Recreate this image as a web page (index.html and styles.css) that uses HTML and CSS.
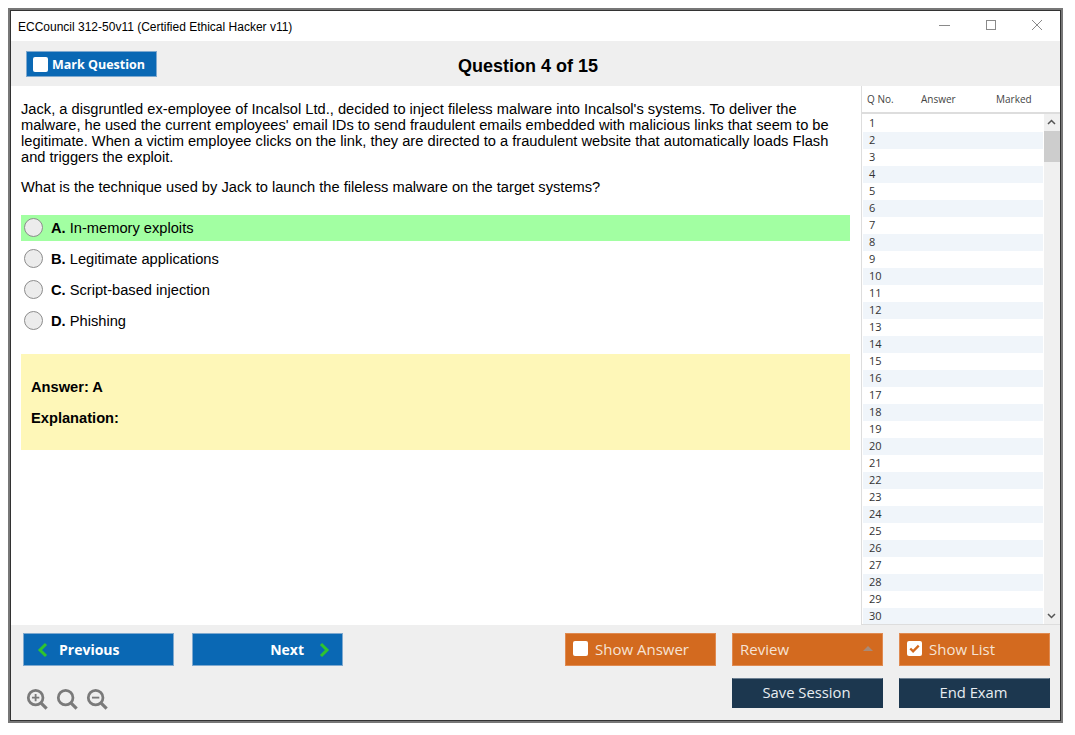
FILE: index.html
```html
<!DOCTYPE html>
<html lang="en">
<head>
    <meta charset="UTF-8">
    <title>ECCouncil 312-50v11</title>
    <link rel="stylesheet" href="styles.css">
</head>
<body>

<div class="window">
    <div class="titlebar">
        <span class="app-title">ECCouncil 312-50v11 (Certified Ethical Hacker v11)</span>
        <div class="window-controls">
            <svg width="12" height="12" viewBox="0 0 12 12"><path d="M0 6.5h11" stroke="#8a8a8a" fill="none"/></svg>
            <svg width="12" height="12" viewBox="0 0 12 12"><rect x="1.5" y="1.5" width="9" height="9" stroke="#8a8a8a" fill="none"/></svg>
            <svg width="12" height="12" viewBox="0 0 12 12"><path d="M1 1l10 10M11 1L1 11" stroke="#8a8a8a" fill="none"/></svg>
        </div>
    </div>

    <div class="toolbar">
        <button class="btn btn-blue mark-btn"><span class="check"></span>Mark Question</button>
        <h1>Question 4 of 15</h1>
    </div>

    <div class="main">
        <div class="question-pane">
            <p class="question">Jack, a disgruntled ex-employee of Incalsol Ltd., decided to inject fileless malware into Incalsol's systems. To deliver the malware, he used the current employees' email IDs to send fraudulent emails embedded with malicious links that seem to be legitimate. When a victim employee clicks on the link, they are directed to a fraudulent website that automatically loads Flash and triggers the exploit.</p>
            <p class="question-ask">What is the technique used by Jack to launch the fileless malware on the target systems?</p>

            <div class="options">
                <div class="option correct"><span class="radio"></span><b>A.</b>&nbsp;In-memory exploits</div>
                <div class="option"><span class="radio"></span><b>B.</b>&nbsp;Legitimate applications</div>
                <div class="option"><span class="radio"></span><b>C.</b>&nbsp;Script-based injection</div>
                <div class="option"><span class="radio"></span><b>D.</b>&nbsp;Phishing</div>
            </div>

            <div class="answer-box">
                <p>Answer: A</p>
                <p>Explanation:</p>
            </div>
        </div>

        <div class="side-list">
            <div class="list-head">
                <span class="col-no">Q No.</span>
                <span class="col-answer">Answer</span>
                <span class="col-marked">Marked</span>
            </div>
            <div class="list-body">
                <div class="rows" id="rows"></div>
                <div class="scrollbar">
                    <svg class="arrow" width="15" height="17" viewBox="0 0 15 17"><path d="M4 10l3.500-3.500L11 10" stroke="#555" stroke-width="1.500" fill="none"/></svg>
                    <div class="track"><div class="thumb"></div></div>
                    <svg class="arrow" width="15" height="17" viewBox="0 0 15 17"><path d="M4 7l3.500 3.500L11 7" stroke="#555" stroke-width="1.500" fill="none"/></svg>
                </div>
            </div>
        </div>
    </div>

    <div class="footer">
        <div class="footer-left">
            <div class="nav-btns">
                <button class="btn btn-blue nav-btn prev">
                    <svg width="11" height="16" viewBox="0 0 11 16"><path d="M9 2L3 8l6 6" stroke="#2fc42f" stroke-width="3" fill="none"/></svg>
                    Previous
                </button>
                <button class="btn btn-blue nav-btn next">
                    Next
                    <svg width="11" height="16" viewBox="0 0 11 16"><path d="M2 2l6 6-6 6" stroke="#2fc42f" stroke-width="3" fill="none"/></svg>
                </button>
            </div>
            <div class="zoom-icons">
                <svg width="22" height="22" viewBox="0 0 24 24"><circle cx="10.500" cy="10.500" r="8" stroke="#7a7a7a" stroke-width="3" fill="none"/><path d="M16.500 16.500l6 6" stroke="#7a7a7a" stroke-width="3.500" fill="none"/><path d="M6.500 10.500h8M10.500 6.500v8" stroke="#7a7a7a" stroke-width="2" fill="none"/></svg>
                <svg width="22" height="22" viewBox="0 0 24 24"><circle cx="10.500" cy="10.500" r="8" stroke="#7a7a7a" stroke-width="3" fill="none"/><path d="M16.500 16.500l6 6" stroke="#7a7a7a" stroke-width="3.500" fill="none"/></svg>
                <svg width="22" height="22" viewBox="0 0 24 24"><circle cx="10.500" cy="10.500" r="8" stroke="#7a7a7a" stroke-width="3" fill="none"/><path d="M16.500 16.500l6 6" stroke="#7a7a7a" stroke-width="3.500" fill="none"/><path d="M6.500 10.500h8" stroke="#7a7a7a" stroke-width="2" fill="none"/></svg>
            </div>
        </div>
        <div class="footer-right">
            <button class="btn btn-orange"><span class="check"></span>Show Answer</button>
            <button class="btn btn-orange review">Review<span class="caret"></span></button>
            <button class="btn btn-orange">
                <span class="check checked"><svg width="15" height="15" viewBox="0 0 16 16"><path d="M3.500 8l3 3 6-6" stroke="#d36a1f" stroke-width="2.500" fill="none"/></svg></span>Show List
            </button>
            <span></span>
            <button class="btn btn-navy">Save Session</button>
            <button class="btn btn-navy">End Exam</button>
        </div>
    </div>
</div>

<script>
    // question list rows
    const rows = document.getElementById('rows');
    for (let i = 1; i <= 30; i++) {
        const row = document.createElement('div');
        row.className = 'row';
        row.textContent = i;
        rows.appendChild(row);
    }
</script>

</body>
</html>
```

FILE: styles.css
```css
* {
    box-sizing: border-box;
}

body {
    margin: 0;
    background-color: #fff;
    font-family: "Liberation Sans", Arial, sans-serif;
    color: #000;
}

.window {
    width: 1055px;
    height: 715px;
    margin: 8px 0 0 8px;
    border: 2px solid #777;
    outline: 1px solid #333;
    outline-offset: -3px;
    padding: 1px;
    display: flex;
    flex-direction: column;
    background-color: #fff;
}

.titlebar {
    height: 30px;
    flex: none;
    display: flex;
    justify-content: space-between;
    align-items: center;
    padding: 2px 0 0 7px;
    background-color: #fff;
}

.app-title {
    font-size: 12px;
}

.window-controls {
    display: flex;
    gap: 34px;
    padding-right: 17px;
    margin-top: -5px;
}

.toolbar {
    height: 45px;
    flex: none;
    display: flex;
    align-items: center;
    padding: 0 0 0 15px;
    background-color: #efefef;
}

.toolbar h1 {
    flex: 1;
    margin: 0;
    padding: 6px 161px 0 0;
    text-align: center;
    font-size: 18px;
    font-weight: bold;
}

.btn {
    border: 1px solid #7fa9cf;
    font-family: "Open Sans", sans-serif;
    color: #fff;
    font-size: 15px;
    display: flex;
    align-items: center;
    padding: 0;
    cursor: pointer;
}

.btn-blue {
    background-color: #0a68b4;
    font-weight: bold;
}

.btn-orange {
    background-color: #d36a1f;
    border-color: #e08a50;
    color: #f6e3d5;
    padding: 0 0 2px 7px;
}

.btn-orange .check {
    margin-right: 7px;
}

.btn-navy {
    background-color: #1c374f;
    border-color: #1c374f;
    border-top-color: #6d8092;
    color: #e8edf2;
    justify-content: center;
    padding: 0 2px 2px 0;
    font-size: 14.800px;
}

.mark-btn {
    width: 131px;
    height: 26px;
    margin-top: 1px;
    padding-left: 6px;
    font-size: 12.500px;
    flex: none;
}

.mark-btn .check {
    margin-right: 4px;
}

.check {
    width: 15px;
    height: 15px;
    border-radius: 2px;
    background-color: #fff;
    margin-right: 5px;
    flex: none;
    display: inline-flex;
}

.main {
    flex: 1;
    display: flex;
    min-height: 0;
    background-color: #fff;
}

.question-pane {
    width: 850px;
    flex: none;
    padding: 15px 11px 0 10px;
}

.question {
    margin: 0;
    font-size: 14.670px;
    line-height: 16px;
}

.question-ask {
    margin: 14px 0 0;
    font-size: 14.670px;
    line-height: 16px;
}

.options {
    margin-top: 20px;
}

.option {
    height: 26px;
    margin-bottom: 5px;
    display: flex;
    align-items: center;
    padding-left: 3px;
    font-size: 14.670px;
}

.correct {
    background-color: #a2ffa2;
}

.radio {
    width: 19px;
    height: 19px;
    border-radius: 50%;
    border: 1px solid #8c8c8c;
    background-color: #ececec;
    margin: 0 8px 1px 0;
    flex: none;
}

.answer-box {
    margin-top: 20px;
    height: 96px;
    padding: 25px 10px 0;
    background-color: #fef7b8;
    font-size: 14.670px;
    font-weight: bold;
}

.answer-box p {
    margin: 0 0 15px;
    line-height: 16px;
}

.side-list {
    flex: 1;
    min-width: 0;
    display: flex;
    flex-direction: column;
    border-left: 1px solid #ddd;
    border-bottom: 1px solid #ddd;
}

.list-head {
    height: 28px;
    flex: none;
    display: flex;
    align-items: center;
    border-bottom: 2px solid #ddd;
    font-family: "Open Sans", sans-serif;
    font-size: 10px;
    color: #444;
    padding-left: 5px;
}

.col-no {
    width: 54px;
}

.col-answer {
    width: 75px;
}

.list-body {
    flex: 1;
    min-height: 0;
    display: flex;
    overflow: hidden;
}

.rows {
    width: 181px;
    flex: none;
    overflow: hidden;
    padding: 1px 0 0 1px;
}

.row {
    height: 17.030px;
    line-height: 16px;
    padding-left: 6px;
    font-family: "Open Sans", sans-serif;
    font-size: 11px;
    color: #333;
}

.row:nth-child(even) {
    background-color: #f0f5fa;
}

.scrollbar {
    flex: 1;
    display: flex;
    flex-direction: column;
    margin-left: 1px;
    background-color: #f0f0f0;
}

.arrow {
    flex: none;
}

.track {
    flex: 1;
}

.thumb {
    height: 31px;
    background-color: #cdcdcd;
}

.footer {
    height: 95px;
    flex: none;
    display: flex;
    justify-content: space-between;
    padding: 8px 10px 13px 12px;
    background-color: #efefef;
}

.footer-left {
    display: flex;
    flex-direction: column;
    justify-content: space-between;
}

.nav-btns {
    display: flex;
    gap: 18px;
}

.nav-btn {
    width: 151px;
    height: 33px;
    font-size: 14px;
}

.prev {
    padding-left: 13px;
    gap: 11px;
}

.next {
    justify-content: flex-end;
    padding-right: 12px;
    gap: 15px;
}

.zoom-icons {
    display: flex;
    gap: 8px;
    margin-left: 3px;
    margin-bottom: -3px;
}

.footer-right {
    display: grid;
    grid-template-columns: 151px 151px 151px;
    grid-template-rows: 33px 30px;
    column-gap: 16px;
    row-gap: 12px;
}

.review {
    justify-content: space-between;
    padding-right: 9px;
}

.caret {
    width: 0;
    height: 0;
    border-left: 5px solid transparent;
    border-right: 5px solid transparent;
    border-bottom: 5px solid #a88a78;
}
```
